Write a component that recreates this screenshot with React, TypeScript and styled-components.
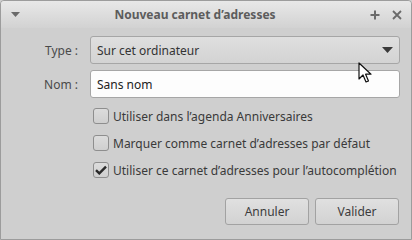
import React from 'react';
import styled, { createGlobalStyle } from 'styled-components';

const Global = createGlobalStyle`
  html, body { margin: 0; padding: 0; background: #cfcfcf; }
  body { font-family: "Noto Sans", "Open Sans", sans-serif; font-size: 12px; color: #3c3c3c; }
`;

const Window = styled.div`
  position: relative;
  width: 412px;
  height: 240px;
  box-sizing: border-box;
  border: 1px solid #9c9c9c;
  border-radius: 4px 4px 0 0;
  background: #cfcfcf;
  display: flex;
  flex-direction: column;
  overflow: hidden;
`;

const TitleBar = styled.div`
  height: 27px;
  flex: none;
  display: flex;
  align-items: center;
  padding: 0 8px;
  background: linear-gradient(#e8e8e8, #d2d2d2);
  color: #5c5c5c;
`;

const Title = styled.div`
  flex: 1;
  text-align: center;
  font-weight: bold;
  font-size: 12px;
`;

const TitleIcon = styled.div<{ $gap?: number }>`
  width: 12px;
  height: 12px;
  display: flex;
  align-items: center;
  justify-content: center;
  margin-left: ${(p) => p.$gap ?? 0}px;
`;

const Body = styled.div`
  flex: 1;
  display: flex;
  flex-direction: column;
  padding: 8px 11px 14px 10px;
`;

const Form = styled.div`
  display: grid;
  grid-template-columns: 67px 1fr;
  column-gap: 12px;
  row-gap: 6px;
  align-items: center;
`;

const Label = styled.div`
  text-align: right;
  color: #4a4a4a;
`;

const Combo = styled.div`
  height: 28px;
  box-sizing: border-box;
  border: 1px solid #a6a6a6;
  border-radius: 3px;
  background: linear-gradient(#dfdfdf, #d3d3d3);
  display: flex;
  align-items: center;
  padding: 0 6px 0 6px;
  color: #333;
`;

const ComboText = styled.span`
  flex: 1;
`;

const Input = styled.div`
  height: 28px;
  box-sizing: border-box;
  border: 1px solid #a6a6a6;
  border-radius: 3px;
  background: #fdfdfd;
  display: flex;
  align-items: center;
  padding: 0 6px;
  color: #222;
`;

const Checks = styled.div`
  display: flex;
  flex-direction: column;
  gap: 11px;
  margin: 10px 0 0 82px;
`;

const CheckRow = styled.label`
  display: flex;
  align-items: center;
  gap: 4px;
  height: 16px;
  white-space: nowrap;
  color: #3a3a3a;
`;

const Box = styled.span`
  flex: none;
  width: 16px;
  height: 16px;
  box-sizing: border-box;
  border: 1px solid #8e8e8e;
  border-radius: 3px;
  background: linear-gradient(#dcdcdc, #cfcfcf);
  display: flex;
  align-items: center;
  justify-content: center;
`;

const Footer = styled.div`
  margin-top: auto;
  display: flex;
  justify-content: flex-end;
  gap: 6px;
  padding-right: 1px;
`;

const Button = styled.div`
  width: 84px;
  height: 27px;
  box-sizing: border-box;
  border: 1px solid #a2a2a2;
  border-radius: 3px;
  background: linear-gradient(#e0e0e0, #d2d2d2);
  display: flex;
  align-items: center;
  justify-content: center;
  color: #3c3c3c;
`;

const Cursor = styled.svg`
  position: absolute;
  left: 357px;
  top: 61px;
`;

const Check = ({ checked, children }: { checked?: boolean; children: React.ReactNode }) => (
  <CheckRow>
    <Box>
      {checked && (
        <svg width="12" height="10" viewBox="0 0 12 10">
          <path d="M1 5.2 L4.3 8.4 L11 1.6" fill="none" stroke="#2a2a2a" strokeWidth="2.4" />
        </svg>
      )}
    </Box>
    {children}
  </CheckRow>
);

export default function App() {
  return (
    <>
      <Global />
      <Window>
        <TitleBar>
          <TitleIcon>
            <svg width="9" height="5" viewBox="0 0 9 5">
              <path d="M0 0 H9 L4.5 5 Z" fill="#6a6a6a" />
            </svg>
          </TitleIcon>
          <Title>Nouveau carnet d’adresses</Title>
          <TitleIcon>
            <svg width="10" height="10" viewBox="0 0 10 10">
              <path d="M5 0.5 V9.5 M0.5 5 H9.5" stroke="#6a6a6a" strokeWidth="2" />
            </svg>
          </TitleIcon>
          <TitleIcon $gap={10}>
            <svg width="10" height="10" viewBox="0 0 10 10">
              <path d="M1 1 L9 9 M9 1 L1 9" stroke="#6a6a6a" strokeWidth="1.8" />
            </svg>
          </TitleIcon>
        </TitleBar>
        <Body>
          <Form>
            <Label>Type :</Label>
            <Combo>
              <ComboText>Sur cet ordinateur</ComboText>
              <svg width="11" height="6" viewBox="0 0 11 6">
                <path d="M0 0 H11 L5.5 6 Z" fill="#3a3a3a" />
              </svg>
            </Combo>
            <Label>Nom :</Label>
            <Input>Sans nom</Input>
          </Form>
          <Checks>
            <Check>Utiliser dans l’agenda Anniversaires</Check>
            <Check>Marquer comme carnet d’adresses par défaut</Check>
            <Check checked>Utiliser ce carnet d’adresses pour l’autocomplétion</Check>
          </Checks>
          <Footer>
            <Button>Annuler</Button>
            <Button>Valider</Button>
          </Footer>
        </Body>
        <Cursor width="14" height="22" viewBox="0 0 14 22">
          <path d="M1 1 V17 L5 13 L8 20 L10.5 19 L7.6 12.2 L13 12.2 Z" fill="#fff" stroke="#111" strokeWidth="1.2" strokeLinejoin="round" />
        </Cursor>
      </Window>
    </>
  );
}
